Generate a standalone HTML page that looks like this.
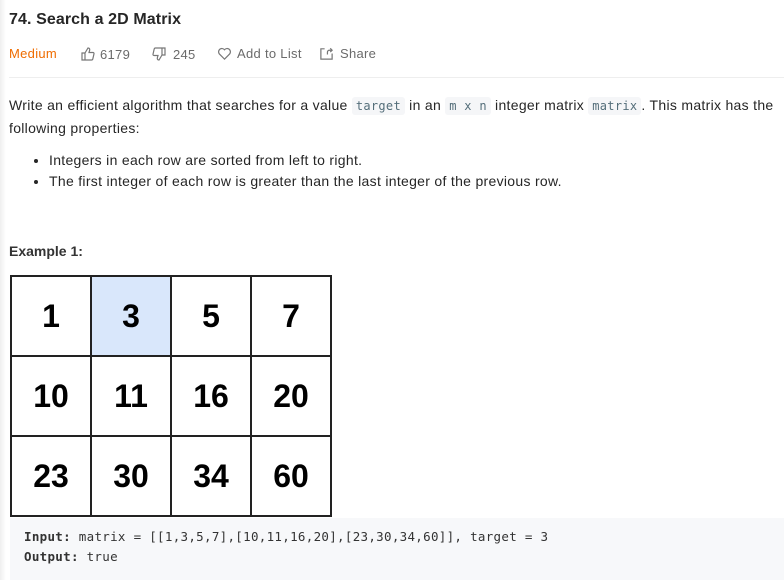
<!DOCTYPE html>
<html><head><meta charset="utf-8"><style>
body{margin:0;width:784px;height:580px;overflow:hidden;background:#fff;font-family:"Liberation Sans",sans-serif;color:#262626;position:relative}
.edge{position:absolute;left:0;top:0;width:6px;height:580px;background:linear-gradient(to right,#efefef,#fff)}
.abs{position:absolute}
h1{position:absolute;left:9px;top:11px;margin:0;font-size:16px;font-weight:bold;color:#262626;letter-spacing:0.1px}
.meta{position:absolute;top:46px;font-size:13px;color:#6b6b6b;display:flex;align-items:center;letter-spacing:0.3px}
.hr{position:absolute;left:9px;right:0;top:77px;border-top:1px solid #eee}
p{margin:0}
code{font-family:"DejaVu Sans Mono",monospace;font-size:12px;letter-spacing:0.3px;background:#f5f6f8;color:#546e7a;padding:2px 4px;border-radius:3px}
.grid{position:absolute;left:10px;top:275px;border-collapse:collapse}
.grid td{width:78px;height:78px;border:2px solid #222;text-align:center;font-weight:bold;font-size:32px;color:#000;padding:0}
.pre{position:absolute;left:10px;right:0;top:518px;height:62px;background:#f7f8fa;font-family:"DejaVu Sans Mono",monospace;font-size:12.5px;letter-spacing:0.3px;color:#333;line-height:20px;padding:9px 0 0 14px;box-sizing:border-box}
</style></head><body>
<div class="edge"></div>
<h1>74. Search a 2D Matrix</h1>
<div class="meta" style="left:9px;color:#ef6c00">Medium</div>
<div class="meta" style="left:80px"><svg width="16" height="16" viewBox="0 0 16 16" fill="none" stroke="#777" stroke-width="1.2"><path d="M2 7h3v7H2zM5 7l3-5c1.5 0 2 1 1.6 2.4L9 6.5h4a1 1 0 0 1 1 1.2l-1.2 5.3a1.3 1.3 0 0 1-1.3 1H5"/></svg><span style="margin-left:4px">6179</span></div>
<div class="meta" style="left:151px"><svg width="16" height="16" viewBox="0 0 16 16" fill="none" stroke="#777" stroke-width="1.2"><path d="M14 9h-3V2h3zM11 9l-3 5c-1.5 0-2-1-1.6-2.4L7 9.5H3a1 1 0 0 1-1-1.2l1.2-5.3a1.3 1.3 0 0 1 1.3-1H11"/></svg><span style="margin-left:6px">245</span></div>
<div class="meta" style="left:217px"><svg width="15" height="15" viewBox="0 0 16 16" fill="none" stroke="#777" stroke-width="1.3"><path d="M8 14L2.5 8.5A3.2 3.2 0 0 1 8 4a3.2 3.2 0 0 1 5.5 4.5z"/></svg><span style="margin-left:5px">Add to List</span></div>
<div class="meta" style="left:319px"><svg width="15" height="15" viewBox="0 0 16 16" fill="none" stroke="#777" stroke-width="1.3"><path d="M6 3H2v11h12V8M9 9V6.5A2 2 0 0 1 11 4.5h3M12 2.5l2 2-2 2"/></svg><span style="margin-left:6px">Share</span></div>
<div class="hr"></div>
<div class="abs" style="left:9px;top:94px;width:775px;font-size:14px;line-height:22px;color:#262626;letter-spacing:0.3px">
<p>Write an efficient algorithm that searches for a value <code>target</code> in an <code>m x n</code> integer matrix <code>matrix</code>. This matrix has the following properties:</p>
</div>
<ul class="abs" style="left:0;top:150px;margin:0;padding-left:49px;font-size:14px;line-height:21px;width:770px;box-sizing:border-box;letter-spacing:0.3px">
<li>Integers in each row are sorted from left to right.</li>
<li>The first integer of each row is greater than the last integer of the previous row.</li>
</ul>
<div class="abs" style="left:9px;top:243px;font-size:14px;font-weight:bold;color:#333">Example 1:</div>
<table class="grid">
<tr><td>1</td><td style="background:#d9e7fb">3</td><td>5</td><td>7</td></tr>
<tr><td>10</td><td>11</td><td>16</td><td>20</td></tr>
<tr><td>23</td><td>30</td><td>34</td><td>60</td></tr>
</table>
<div class="pre"><b>Input:</b> matrix = [[1,3,5,7],[10,11,16,20],[23,30,34,60]], target = 3<br><b>Output:</b> true</div>
</body></html>
